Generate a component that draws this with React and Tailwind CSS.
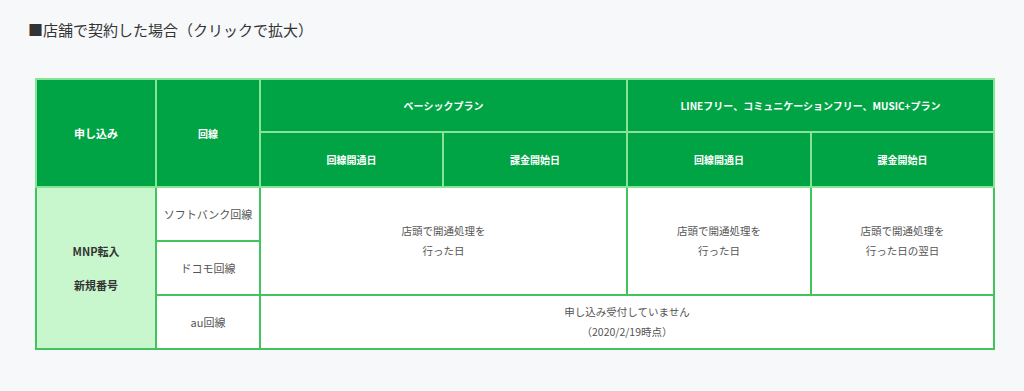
export default function App() {
  const head = "border-2 border-[#86e494] bg-[#00a444] text-white font-bold text-[10px] text-center align-middle";
  const cell = "border-2 border-[#41c35e] text-center align-middle";
  const body = cell + " bg-white text-[#555] leading-[20px]";

  return (
    <div
      className="w-[1024px] h-[391px] bg-[#f7f8fa] pt-[19px]"
      style={{ fontFamily: '"Noto Sans CJK JP", "Noto Sans", sans-serif' }}
    >
      <h2 className="pl-[28px] text-[15px] text-[#333] leading-[22px]">■店舗で契約した場合（クリックで拡大）</h2>

      <table className="ml-[35px] mt-[37px] w-[958px] table-fixed border-collapse">
        <colgroup>
          <col className="w-[120px]" />
          <col className="w-[104px]" />
          <col className="w-[183px]" />
          <col className="w-[184px]" />
          <col className="w-[184px]" />
          <col className="w-[183px]" />
        </colgroup>
        <thead>
          <tr className="h-[53px]">
            <th rowSpan={2} className={head + " text-[11px]"}>申し込み</th>
            <th rowSpan={2} className={head}>回線</th>
            <th colSpan={2} className={head}>ベーシックプラン</th>
            <th colSpan={2} className={head}>LINEフリー、コミュニケーションフリー、MUSIC+プラン</th>
          </tr>
          <tr className="h-[55px]">
            <th className={head + " text-[9.5px]"}>回線開通日</th>
            <th className={head + " text-[9.5px]"}>課金開始日</th>
            <th className={head + " text-[9.5px]"}>回線開通日</th>
            <th className={head + " text-[9.5px]"}>課金開始日</th>
          </tr>
        </thead>
        <tbody>
          <tr className="h-[54px]">
            <td rowSpan={3} className={cell + " bg-[#c9f7cd] text-[#333] font-bold text-[11px] leading-[34px]"}>
              MNP転入<br />新規番号
            </td>
            <td className={body + " text-[11px]"}>ソフトバンク回線</td>
            <td colSpan={2} rowSpan={2} className={body + " text-[10.5px]"}>店頭で開通処理を<br />行った日</td>
            <td rowSpan={2} className={body + " text-[10.5px]"}>店頭で開通処理を<br />行った日</td>
            <td rowSpan={2} className={body + " text-[10.5px]"}>店頭で開通処理を<br />行った日の翌日</td>
          </tr>
          <tr className="h-[54px]">
            <td className={body + " text-[11px]"}>ドコモ回線</td>
          </tr>
          <tr className="h-[54px]">
            <td className={body + " text-[11px]"}>au回線</td>
            <td colSpan={4} className={body + " text-[10.5px]"}>申し込み受付していません<br />（2020/2/19時点）</td>
          </tr>
        </tbody>
      </table>
    </div>
  );
}
